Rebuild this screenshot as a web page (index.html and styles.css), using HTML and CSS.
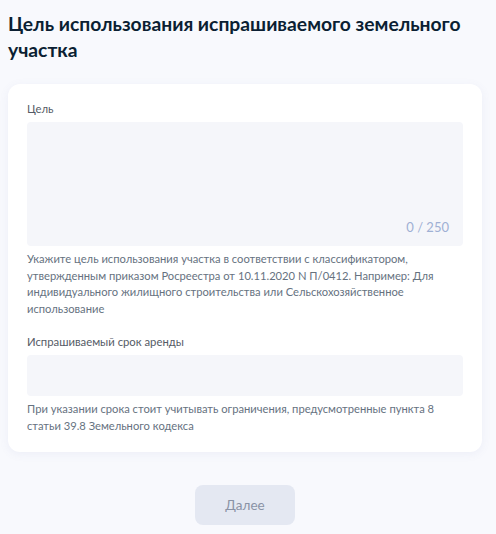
FILE: index.html
```html
<!DOCTYPE html>
<html lang="ru">
<head>
    <meta charset="UTF-8">
    <meta name="viewport" content="width=device-width, initial-scale=1.0">
    <title>Цель использования участка</title>
    <link rel="stylesheet" href="styles.css">
</head>
<body>
    <div class="page">
        <h1>Цель использования испрашиваемого земельного участка</h1>

        <div class="card">
            <div class="field">
                <label for="purpose">Цель</label>
                <div class="textarea-wrap">
                    <textarea id="purpose" maxlength="250"></textarea>
                    <span class="counter">0 / 250</span>
                </div>
                <p class="hint">Укажите цель использования участка в соответствии с классификатором, утвержденным приказом Росреестра от 10.11.2020 N П/0412. Например: Для индивидуального жилищного строительства или Сельскохозяйственное использование</p>
            </div>

            <div class="field">
                <label for="term">Испрашиваемый срок аренды</label>
                <input type="text" id="term">
                <p class="hint">При указании срока стоит учитывать ограничения, предусмотренные пункта 8 статьи 39.8 Земельного кодекса</p>
            </div>
        </div>

        <div class="actions">
            <button type="button" disabled>Далее</button>
        </div>
    </div>
</body>
</html>
```

FILE: styles.css
```css
* {
    box-sizing: border-box;
    margin: 0;
    padding: 0;
}

body {
    font-family: 'Lato', 'Noto Sans', sans-serif;
    background: #f8f9fd;
    color: #0b1f33;
}

.page {
    padding: 11px 14px 8px 8px;
}

h1 {
    font-size: 19.3px;
    font-weight: 700;
    line-height: 26px;
    color: #0b1f33;
    margin-bottom: 21px;
}

.card {
    background: #fff;
    border-radius: 12px;
    box-shadow: 0 2px 10px rgba(100, 120, 180, 0.08);
    padding: 17px 19px 18px 19px;
}

.field + .field {
    margin-top: 17px;
}

label {
    display: block;
    font-size: 11.3px;
    font-weight: 400;
    line-height: 16px;
    color: #555b66;
    margin-bottom: 5px;
}

.textarea-wrap {
    position: relative;
}

textarea,
input[type="text"] {
    display: block;
    width: 100%;
    border: none;
    border-radius: 4px;
    background: #f5f6fa;
    font-family: inherit;
    font-size: 13px;
    outline: none;
    resize: none;
}

textarea {
    height: 124px;
    padding: 10px 12px;
}

input[type="text"] {
    height: 41px;
    padding: 0 12px;
}

.counter {
    position: absolute;
    right: 14px;
    bottom: 11px;
    font-size: 13px;
    color: #9fb0d4;
}

.hint {
    font-size: 11.2px;
    line-height: 16.5px;
    color: #66727f;
    margin-top: 5px;
}

.actions {
    display: flex;
    justify-content: center;
    margin-top: 33px;
}

button {
    width: 100px;
    height: 40px;
    border: none;
    border-radius: 8px;
    background: #e4e8f2;
    color: #8a93a6;
    font-family: inherit;
    font-size: 13.5px;
}
```
